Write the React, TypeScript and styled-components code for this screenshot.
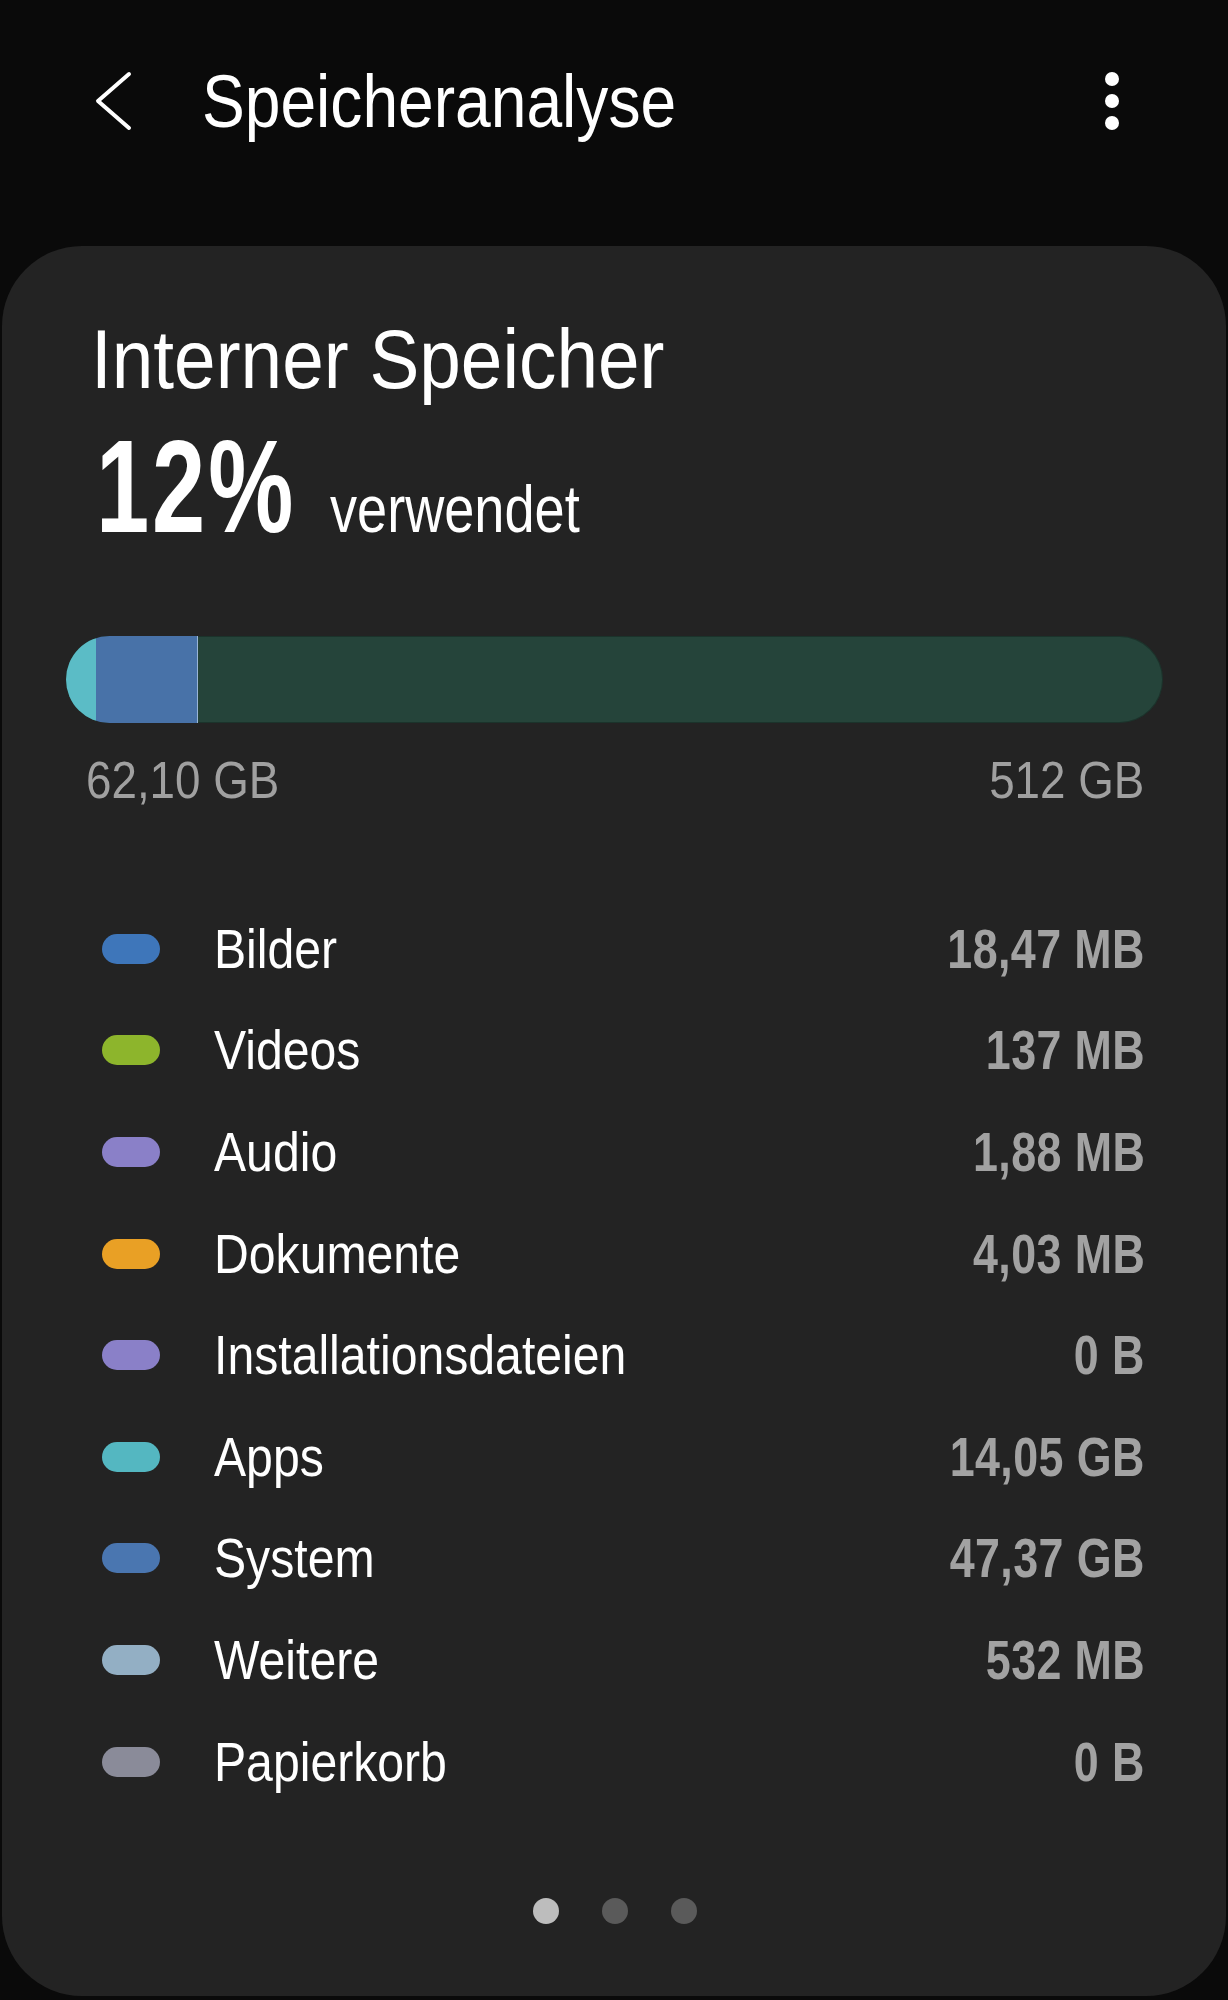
import React from "react";
import styled, { createGlobalStyle } from "styled-components";

const FONT = `"Liberation Sans", Arial, sans-serif`;

const Global = createGlobalStyle`
  html, body { margin: 0; padding: 0; background: #0a0a0a; }
  body { font-family: ${FONT}; color: #ffffff; }
  * { box-sizing: border-box; }
`;

const Page = styled.div`
  width: 1228px;
  min-height: 2000px;
  background: #0a0a0a;
  padding-top: 63px;
  display: flex;
  flex-direction: column;
`;

const Header = styled.header`
  display: flex;
  align-items: center;
  height: 76px;
  padding-left: 94px;
  padding-right: 109px;
`;

const BackButton = styled.button`
  width: 40px;
  height: 64px;
  padding: 0;
  border: 0;
  background: transparent;
  display: flex;
  align-items: center;
  justify-content: center;
`;

const Title = styled.h1`
  margin: 0 0 0 68px;
  font-size: 75px;
  line-height: 1;
  font-weight: 400;
  color: #ffffff;
  white-space: nowrap;
  transform: scaleX(0.855);
  transform-origin: left center;
`;

const Kebab = styled.div`
  margin-left: auto;
  display: flex;
  flex-direction: column;
  gap: 8px;
`;

const KebabDot = styled.span`
  width: 14px;
  height: 14px;
  border-radius: 50%;
  background: #ffffff;
`;

const Card = styled.section`
  margin: 107px 2px 0;
  height: 1750px;
  background: #232323;
  border-radius: 80px;
  padding: 71px 63px 0 64px;
  display: flex;
  flex-direction: column;
`;

const Heading = styled.h2`
  margin: 0 0 0 25px;
  font-size: 84px;
  line-height: 1;
  font-weight: 400;
  white-space: nowrap;
  transform: scaleX(0.89);
  transform-origin: left center;
`;

const UsageLine = styled.div`
  display: flex;
  align-items: baseline;
  margin: 20px 0 0 30px;
`;

const Percent = styled.span`
  width: 202px;
  flex: none;
  white-space: nowrap;
  font-size: 131px;
  line-height: 1;
  font-weight: 700;
  letter-spacing: 4px;
  transform: scaleX(0.73);
  transform-origin: left center;
`;

const UsedWord = styled.span`
  margin-left: 32px;
  font-size: 66px;
  line-height: 1;
  font-weight: 400;
  white-space: nowrap;
  transform: scaleX(0.82);
  transform-origin: left center;
`;

const Bar = styled.div`
  margin-top: 84px;
  height: 87px;
  border-radius: 44px;
  background: #25443a;
  overflow: hidden;
  display: flex;
  box-shadow: inset 0 0 0 1px rgba(0, 0, 0, 0.25);
`;

const Segment = styled.div<{ $color: string; $edge?: boolean }>`
  height: 100%;
  background: ${(p) => p.$color};
  border-right: ${(p) => (p.$edge ? "1px solid rgba(190, 210, 235, 0.7)" : "0")};
`;

const Scale = styled.div`
  display: flex;
  justify-content: space-between;
  margin-top: 31px;
  padding: 0 19px 0 20px;
`;

const ScaleLabel = styled.span<{ $end?: boolean }>`
  display: inline-block;
  font-size: 52px;
  line-height: 1;
  color: #a0a0a0;
  white-space: nowrap;
  transform: scaleX(0.88);
  transform-origin: ${(p) => (p.$end ? "right" : "left")} center;
`;

const List = styled.ul`
  list-style: none;
  margin: 92px 0 0;
  padding: 0;
  display: flex;
  flex-direction: column;
`;

const Row = styled.li`
  height: 101.6px;
  display: flex;
  align-items: center;
  padding: 0 18px 0 36px;
`;

const Pill = styled.span<{ $color: string }>`
  width: 58px;
  height: 30px;
  border-radius: 15px;
  background: ${(p) => p.$color};
  flex: none;
`;

const Label = styled.span`
  margin-left: 54px;
  font-size: 56px;
  line-height: 1;
  font-weight: 400;
  color: #ffffff;
  white-space: nowrap;
  transform: scaleX(0.86);
  transform-origin: left center;
`;

const Value = styled.span`
  margin-left: auto;
  font-size: 56px;
  line-height: 1;
  font-weight: 700;
  color: #a2a2a2;
  white-space: nowrap;
  letter-spacing: 0.5px;
  transform: scaleX(0.8);
  transform-origin: right center;
`;

const Pager = styled.div`
  margin-top: 86px;
  display: flex;
  justify-content: center;
  gap: 43px;
`;

const PagerDot = styled.span<{ $active?: boolean }>`
  width: 26px;
  height: 26px;
  border-radius: 50%;
  background: ${(p) => (p.$active ? "#bdbdbd" : "#5a5a5a")};
`;

type Item = { name: string; value: string; color: string };

const items: Item[] = [
  { name: "Bilder", value: "18,47 MB", color: "#3e76ba" },
  { name: "Videos", value: "137 MB", color: "#8db52c" },
  { name: "Audio", value: "1,88 MB", color: "#8a80c8" },
  { name: "Dokumente", value: "4,03 MB", color: "#e9a025" },
  { name: "Installationsdateien", value: "0 B", color: "#8a80c8" },
  { name: "Apps", value: "14,05 GB", color: "#54b7c1" },
  { name: "System", value: "47,37 GB", color: "#4a76b0" },
  { name: "Weitere", value: "532 MB", color: "#93afc4" },
  { name: "Papierkorb", value: "0 B", color: "#8a8b99" },
];

const TOTAL_GB = 512;
const segments = [
  { gb: 14.05, color: "#5bbcc6" },
  { gb: 47.37, color: "#4872a8", edge: true },
];

export default function App() {
  return (
    <>
      <Global />
      <Page>
        <Header>
          <BackButton aria-label="Zurück">
            <svg width="40" height="64" viewBox="0 0 40 64" fill="none">
              <polyline
                points="35,5 4,32 35,59"
                stroke="#ffffff"
                strokeWidth="4"
                strokeLinecap="round"
                strokeLinejoin="round"
              />
            </svg>
          </BackButton>
          <Title>Speicheranalyse</Title>
          <Kebab>
            <KebabDot />
            <KebabDot />
            <KebabDot />
          </Kebab>
        </Header>
        <Card>
          <Heading>Interner Speicher</Heading>
          <UsageLine>
            <Percent>12%</Percent>
            <UsedWord>verwendet</UsedWord>
          </UsageLine>
          <Bar>
            {segments.map((s, i) => (
              <Segment
                key={i}
                $color={s.color}
                $edge={s.edge}
                style={{ width: `${(s.gb / TOTAL_GB) * 100}%` }}
              />
            ))}
          </Bar>
          <Scale>
            <ScaleLabel>62,10 GB</ScaleLabel>
            <ScaleLabel $end>512 GB</ScaleLabel>
          </Scale>
          <List>
            {items.map((it) => (
              <Row key={it.name}>
                <Pill $color={it.color} />
                <Label>{it.name}</Label>
                <Value>{it.value}</Value>
              </Row>
            ))}
          </List>
          <Pager>
            <PagerDot $active />
            <PagerDot />
            <PagerDot />
          </Pager>
        </Card>
      </Page>
    </>
  );
}
